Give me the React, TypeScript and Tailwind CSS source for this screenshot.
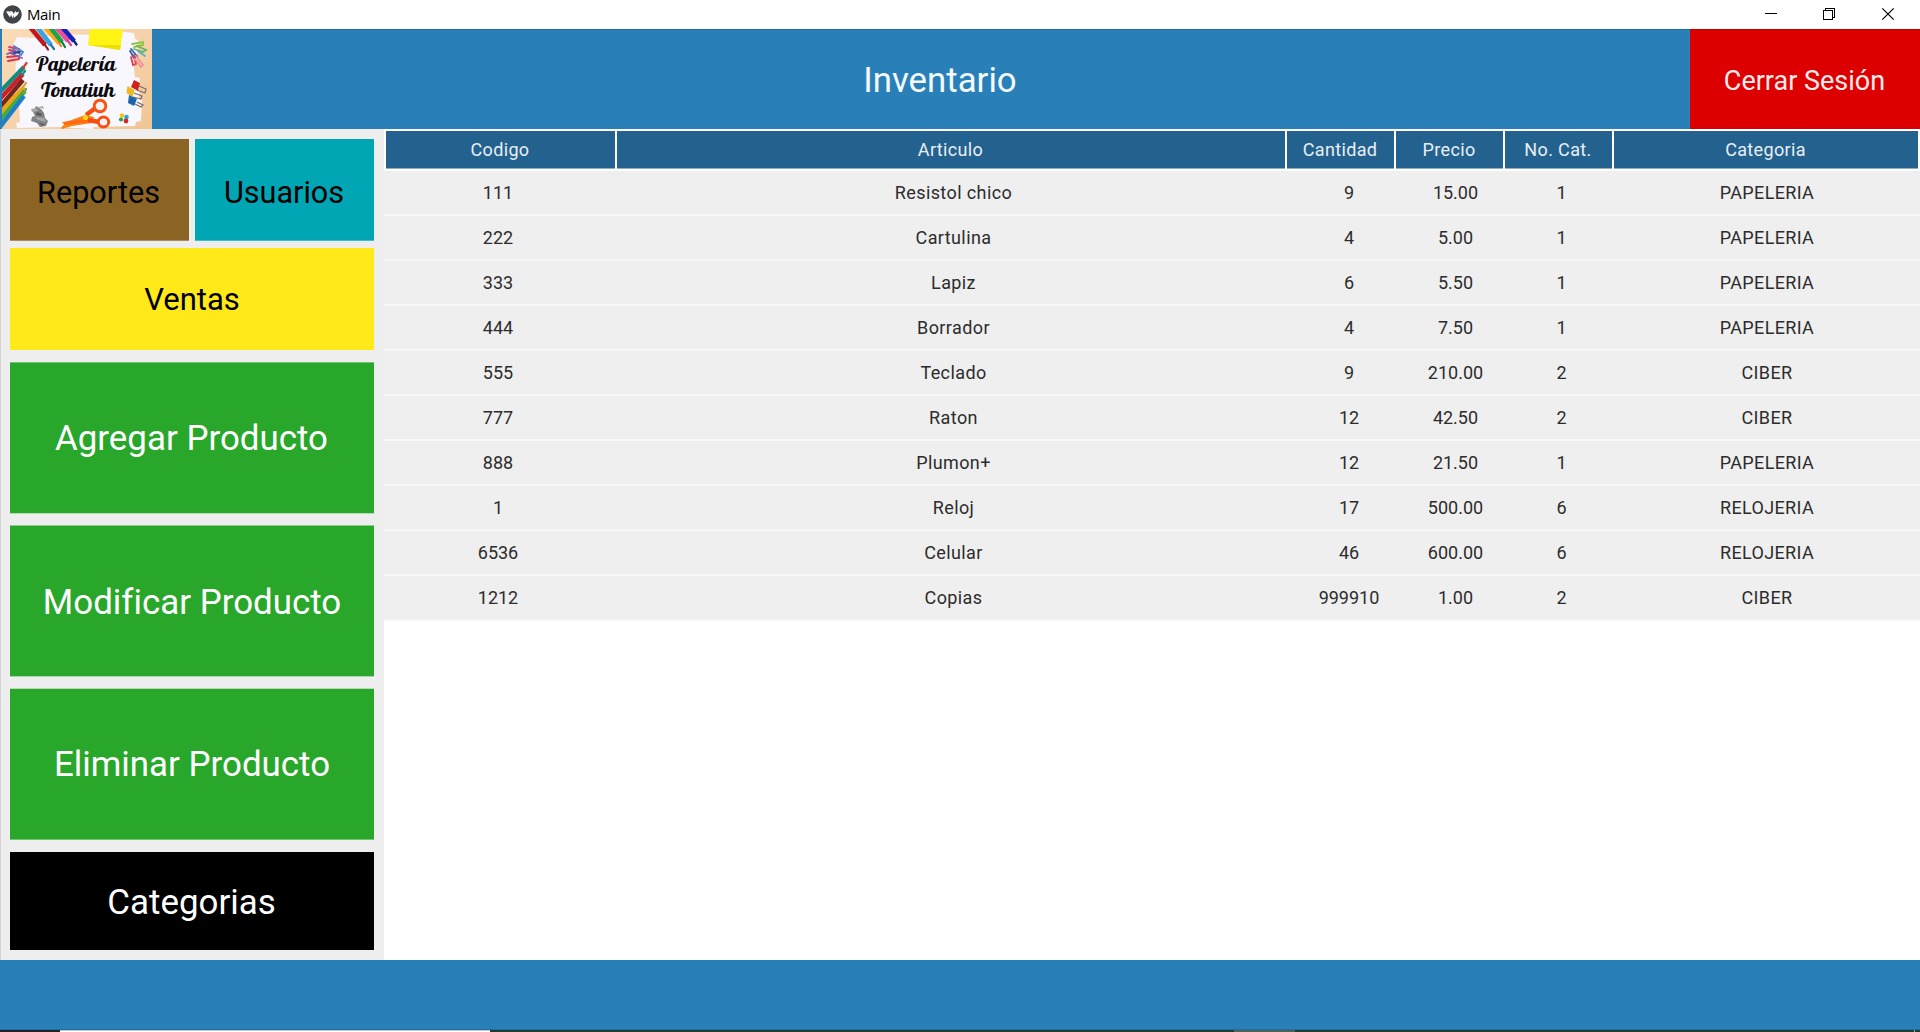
const rows = [
  ["111", "Resistol chico", "9", "15.00", "1", "PAPELERIA"],
  ["222", "Cartulina", "4", "5.00", "1", "PAPELERIA"],
  ["333", "Lapiz", "6", "5.50", "1", "PAPELERIA"],
  ["444", "Borrador", "4", "7.50", "1", "PAPELERIA"],
  ["555", "Teclado", "9", "210.00", "2", "CIBER"],
  ["777", "Raton", "12", "42.50", "2", "CIBER"],
  ["888", "Plumon+", "12", "21.50", "1", "PAPELERIA"],
  ["1", "Reloj", "17", "500.00", "6", "RELOJERIA"],
  ["6536", "Celular", "46", "600.00", "6", "RELOJERIA"],
  ["1212", "Copias", "999910", "1.00", "2", "CIBER"],
];
const headers = ["Codigo", "Articulo", "Cantidad", "Precio", "No. Cat.", "Categoria"];
const cellStyles = [
  "flex items-center justify-center pr-[1px]",
  "flex items-center justify-center tracking-[0.4px]",
  "flex items-center justify-center pl-[1px]",
  "flex items-center justify-center pl-[1px]",
  "flex items-center justify-center pl-[1px]",
  "flex items-center justify-center tracking-[0.35px]",
];

function TitleBar() {
  return (
    <div className="flex h-[29px] shrink-0 items-center bg-white">
      <svg className="ml-[3px] h-[19px] w-[19px]" viewBox="0 0 19 19">
        <circle cx="9.5" cy="9.5" r="9.3" fill="#3f4447" />
        <path
          d="M3 6.600l3.300-.4 2 3.100-1.300 3.100zM7 6l2.500.5 1.300 3.300-.9 3.700-1.800-3.600zM10.600 8.800l1.900-2.700.9 1.500 2.800-1-1.700 3.500-3.400 2.700z"
          fill="#fff"
        />
      </svg>
      <span className="mb-[1px] ml-[5px] font-['Open_Sans',sans-serif] text-[15px] leading-[20px] tracking-[-0.4px] text-black">
        Main
      </span>
      <svg
        className="ml-auto text-black"
        width="155"
        height="29"
        viewBox="0 0 155 29"
        fill="none"
        stroke="currentColor"
        shapeRendering="crispEdges"
      >
        <path d="M0 13.5h12" />
        <path d="M58.500 10.500h9v9h-9zM60.500 10.500v-2h9v9h-2" />
        <path d="M117.300 8.300l11.400 11.400M128.700 8.300l-11.400 11.400" shapeRendering="auto" strokeWidth="1.2" />
      </svg>
    </div>
  );
}

function Logo() {
  return (
    <svg className="h-[100px] w-[152px]" viewBox="0 0 152 100">
      <defs>
        <linearGradient id="wood" x1="0" y1="0" x2="1" y2="1">
          <stop offset="0" stopColor="#fbdcb6" />
          <stop offset="0.5" stopColor="#f6d2aa" />
          <stop offset="1" stopColor="#f0c594" />
        </linearGradient>
        <clipPath id="desk">
          <rect x="2" width="150" height="100" />
        </clipPath>
      </defs>
      <g clipPath="url(#desk)">
        <rect x="2" width="150" height="100" fill="url(#wood)" />
        <path
          d="M17 8l18 1 28-4 32 1 30-3 9 1 1 6 3 1-1 19-4 1 2 17 5 1-1 20 3 1-1 22-5 1-1 4-41 1-1 2-35-2-41 1-1-5 4-1-1-18-5-2 2-40 3-1-6-10 1-8z"
          fill="#f8f7fd"
        />
        {/* crayons along the top */}
        <g strokeWidth="4.600" strokeLinecap="butt">
          <path d="M30-2L45 16" stroke="#c3161d" />
          <path d="M37-2L51 16" stroke="#38a4dd" />
          <path d="M45-2L59 14" stroke="#ffa71a" />
          <path d="M50-2L62 13" stroke="#18a84b" />
          <path d="M56-2L68 12" stroke="#ec4f9c" />
          <path d="M62-2L74 12" stroke="#1722b9" />
        </g>
        <g strokeWidth="2.200" strokeLinecap="round">
          <path d="M45 16l3 4.500" stroke="#98121b" />
          <path d="M51 16l3 4" stroke="#2274a4" />
          <path d="M59 14l2 3" stroke="#f77c16" />
          <path d="M62 13l3 5" stroke="#0e7d37" />
          <path d="M68 12l3 4" stroke="#d83e94" />
          <path d="M74 12l2.500 3.500" stroke="#101879" />
        </g>
        <path d="M90 0h33l-3 21-32-5z" fill="#fff414" />
        <path d="M88 16l32 5 1-5z" fill="#ece000" />
        {/* pencils on the left */}
        <g strokeWidth="4.400">
          <path d="M-1 64L24 38" stroke="#138b80" />
          <path d="M0 70L23 45" stroke="#c8222a" />
          <path d="M0 78L23 51" stroke="#77241d" />
          <path d="M0 84L24 58" stroke="#e9a414" />
          <path d="M0 91L25 62" stroke="#4ba93a" />
          <path d="M0 98L24 67" stroke="#1b7fcb" />
        </g>
        <g strokeWidth="2.200" strokeLinecap="round">
          <path d="M23 39l3.500-5" stroke="#d33e35" />
          <path d="M22 46l3-4" stroke="#1a8c7d" />
          <path d="M23 58l3-4" stroke="#e0a23c" />
          <path d="M24 64l2-4" stroke="#73a448" />
        </g>
        {/* paper clips */}
        <g fill="none" strokeWidth="1.800" strokeLinecap="round">
          <path d="M9 18l10 2-1 3-9-2" stroke="#e13a68" />
          <path d="M14 17l9 6-2 3-8-6" stroke="#4386d6" />
          <path d="M7 28l12-1v3L8 32" stroke="#d4335a" />
          <path d="M10 24l12 5M7 25l8-3" stroke="#8359ae" />
          <path d="M14 24l6-1" stroke="#29437d" />
          <path d="M132 15l11-2v3l-9 2" stroke="#8bc43f" />
          <path d="M134 20l9 3 3-2-9-4" stroke="#68b55c" />
          <path d="M131 20l6 7-3 2-4-7" stroke="#345eae" />
          <path d="M131 28l2 8 3-1-2-9" stroke="#e43d4d" />
          <path d="M136 27l7 9-2 2-6-8" stroke="#ed9398" />
          <path d="M138 22l7 5" stroke="#50b4cb" />
        </g>
        {/* binder clips */}
        <g fill="none" stroke="#7b6a64" strokeWidth="1.200">
          <path d="M139 57l7 3-1 4-8-3M134 64l8 3-1 3-8-2M137 73l6 3-2 2-6-3" />
        </g>
        <path d="M134 51l6 3-2 8-7-4z" fill="#ce2419" />
        <path d="M127.500 57l7 4-2 7-6-4z" fill="#f1b91b" />
        <path d="M129 66l8 4-3 7-6-3z" fill="#1c64ac" />
        {/* pins */}
        <circle cx="122" cy="86.500" r="2.300" fill="#f4c51b" />
        <circle cx="121" cy="90.500" r="2.100" fill="#319f4c" />
        <circle cx="126.500" cy="88" r="2.300" fill="#29a8dc" />
        <circle cx="126" cy="92" r="2.400" fill="#d92629" />
        {/* grey clips */}
        <path d="M36 77l5 3 3 4 1 5 3 3-2 5-6 1-3-4-6-2 1-4 3-1-2-4z" fill="#818284" />
        <path d="M31 80l6-1 1 3-6 1zM35 88l9 1 2 4-8-2zM38 78l5-1 1 3z" fill="#a6a7a9" />
        <path d="M37 83l5 2-1 2-5-1zM39 94l5 1-1 2z" fill="#58595b" />
        {/* scissors */}
        <path d="M61 99l5-6 19-7 9 2-2 6-20 3-10 3z" fill="#f98512" />
        <path d="M62 93l24-3 7-1-2 4-26 3z" fill="#ff6a16" />
        <path d="M86 86l11-8M88 91l11 2" stroke="#f84d12" strokeWidth="4.500" />
        <circle cx="100" cy="77" r="5.800" fill="#f4f1f7" stroke="#f95113" strokeWidth="2.900" />
        <ellipse cx="103.500" cy="93" rx="5.200" ry="5" fill="#f4f1f7" stroke="#f44d14" strokeWidth="2.900" />
        <circle cx="85.500" cy="88.500" r="2.600" fill="#ffd60f" />
      </g>
      <g
        fill="#0b0b10"
        fontWeight="400"
        fontFamily="'Lobster','Z003','URW Chancery L','Liberation Serif',serif"
      >
        <text x="36" y="42" fontSize="20" textLength="80" lengthAdjust="spacingAndGlyphs">Papelería</text>
        <text x="41" y="68" fontSize="20" textLength="74" lengthAdjust="spacingAndGlyphs">Tonatiuh</text>
      </g>
    </svg>
  );
}

export default function App() {
  return (
    <div className="flex h-[1032px] w-[1920px] flex-col overflow-hidden bg-white font-[Roboto,sans-serif] [font-variant-ligatures:none]">
      <TitleBar />
      <header className="flex h-[100px] shrink-0 border-t border-[#226b9b] bg-[#2980b9] text-[#f4f9fc]">
        <div className="-mt-px">
          <Logo />
        </div>
        <h1 className="flex flex-1 items-center justify-center pt-[1px] pl-[38px] text-[34.8px]">Inventario</h1>
        <button className="-mt-px h-[100px] w-[230px] border-t border-[#bb0000] bg-[#dd0000] pt-[4px] pr-[1px] text-[27px] text-[#fdeaea]">
          Cerrar Sesión
        </button>
      </header>
      <main className="flex h-[831px] shrink-0">
        <aside className="flex w-[384px] shrink-0 flex-col border-l border-[#d2d2d2] bg-[#eeeeee] pt-[10px] pr-[10px] pb-[10px] pl-[9px] text-[34.9px]">
          <div className="flex h-[102px] gap-[6px] text-[30.600px] text-black">
            <button className="w-[179px] bg-[#8b6322] pt-[6px] pr-[2px] shadow-[inset_0_-1px_0_#a98c5f]">Reportes</button>
            <button className="w-[179px] bg-[#00a6b3] pt-[6px] pr-[1px] shadow-[inset_0_-1px_0_#45bdc6]">Usuarios</button>
          </div>
          <button className="mt-[7px] h-[102px] bg-[#ffe918] pt-[3px] text-[31px] text-black">Ventas</button>
          <button className="mt-[12px] h-[151px] bg-[#28a72b] pt-[3px] pr-[1px] text-white shadow-[inset_0_1px_0_#73c475,0_1px_0_#b5dbb5]">
            Agregar Producto
          </button>
          <button className="mt-[13px] h-[150px] bg-[#28a72b] pt-[4px] text-white shadow-[0_-1px_0_#8bcb8c,0_1px_0_#a9d7a9]">
            Modificar Producto
          </button>
          <button className="mt-[13px] h-[150px] bg-[#28a72b] pt-[3px] text-white shadow-[0_-1px_0_#b5dbb5,0_1px_0_#73c475]">
            Eliminar Producto
          </button>
          <button className="mt-[13px] flex-1 bg-black pt-[4px] pr-[1px] text-white">Categorias</button>
        </aside>
        <section className="flex-1">
          <div className="grid grid-cols-[229px_668px_107px_107px_107px_304px] gap-[2px] pt-[2px] pl-[2px] text-[18px] tracking-[0.35px] text-[#e9eff4]">
            {headers.map((h) => (
              <div
                key={h}
                className="flex h-[38px] items-center justify-center bg-[#23628e] pr-[1px] pb-[2px] shadow-[inset_0_-1px_0_#8facc4]"
              >
                {h}
              </div>
            ))}
          </div>
          <div className="mt-[2px]">
            {rows.map((r) => (
              <div
                key={r[0]}
                className="grid h-[45px] grid-cols-[229px_681px_109px_104px_108px_304px] border-b-2 border-[#f7f7f7] bg-[#efefef] text-[18px] text-[#2c2c2c]"
              >
                {r.map((c, i) => (
                  <div key={i} className={cellStyles[i]}>
                    {c}
                  </div>
                ))}
              </div>
            ))}
          </div>
        </section>
      </main>
      <footer className="h-[70px] shrink-0 border-b border-[#226b9b] bg-[#2980b9]" />
      <div className="flex h-[2px] shrink-0">
        <div className="w-[60px] bg-[#222428]" />
        <div className="w-[430px] border-t border-[#c9c9c9] bg-white" />
        <div className="w-[744px] bg-[#223c33]" />
        <div className="w-[61px] bg-[#4e625b]" />
        <div className="w-[619px] bg-[#223c33]" />
        <div className="w-[1px] bg-[#9aa5a1]" />
        <div className="flex-1 bg-[#223c33]" />
      </div>
    </div>
  );
}
